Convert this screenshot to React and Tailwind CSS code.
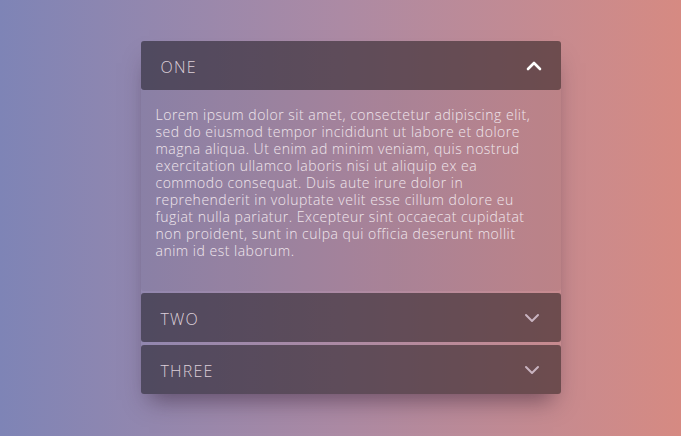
import { ChevronUp, ChevronDown } from 'lucide-react';

const lorem =
  'Lorem ipsum dolor sit amet, consectetur adipiscing elit, sed do eiusmod tempor incididunt ut labore et dolore magna aliqua. Ut enim ad minim veniam, quis nostrud exercitation ullamco laboris nisi ut aliquip ex ea commodo consequat. Duis aute irure dolor in reprehenderit in voluptate velit esse cillum dolore eu fugiat nulla pariatur. Excepteur sint occaecat cupidatat non proident, sunt in culpa qui officia deserunt mollit anim id est laborum.';

function Header({ title, open }) {
  return (
    <div className="flex h-[49px] items-center justify-between rounded-[3px] bg-black/45 pl-5">
      <span className="pt-[3px] text-[16px] font-light tracking-[1.2px] text-[#dccfd9]">{title}</span>
      {open ? (
        <ChevronUp size={24} strokeWidth={2.6} className="mr-[15px] text-white" />
      ) : (
        <ChevronDown size={24} strokeWidth={2} className="mr-[17px] mt-[1px] text-[#c9b3c0]" />
      )}
    </div>
  );
}

export default function App() {
  return (
    <div
      className="flex h-[436px] w-full justify-center bg-gradient-to-r from-[#7e84b6] via-[#ac8aa4] to-[#d68a82] pt-[41px]"
      style={{ fontFamily: '"Open Sans", Lato, sans-serif' }}
    >
      <div className="ml-5 flex h-[353px] w-[420px] flex-col gap-[2px] rounded-[3px] shadow-[0_14px_22px_-8px_rgba(40,20,40,0.5)]">
        <div>
          <Header title="ONE" open />
          <div className="h-[201px] rounded-b-[3px] bg-black/5 pl-[15px] pr-[14px] pt-[16px] text-[14px] font-light leading-[17px] tracking-[0.5px] text-[#f0e6ec]">
            {lorem}
          </div>
        </div>
        <Header title="TWO" />
        <div className="mt-[1px]">
          <Header title="THREE" />
        </div>
      </div>
    </div>
  );
}
